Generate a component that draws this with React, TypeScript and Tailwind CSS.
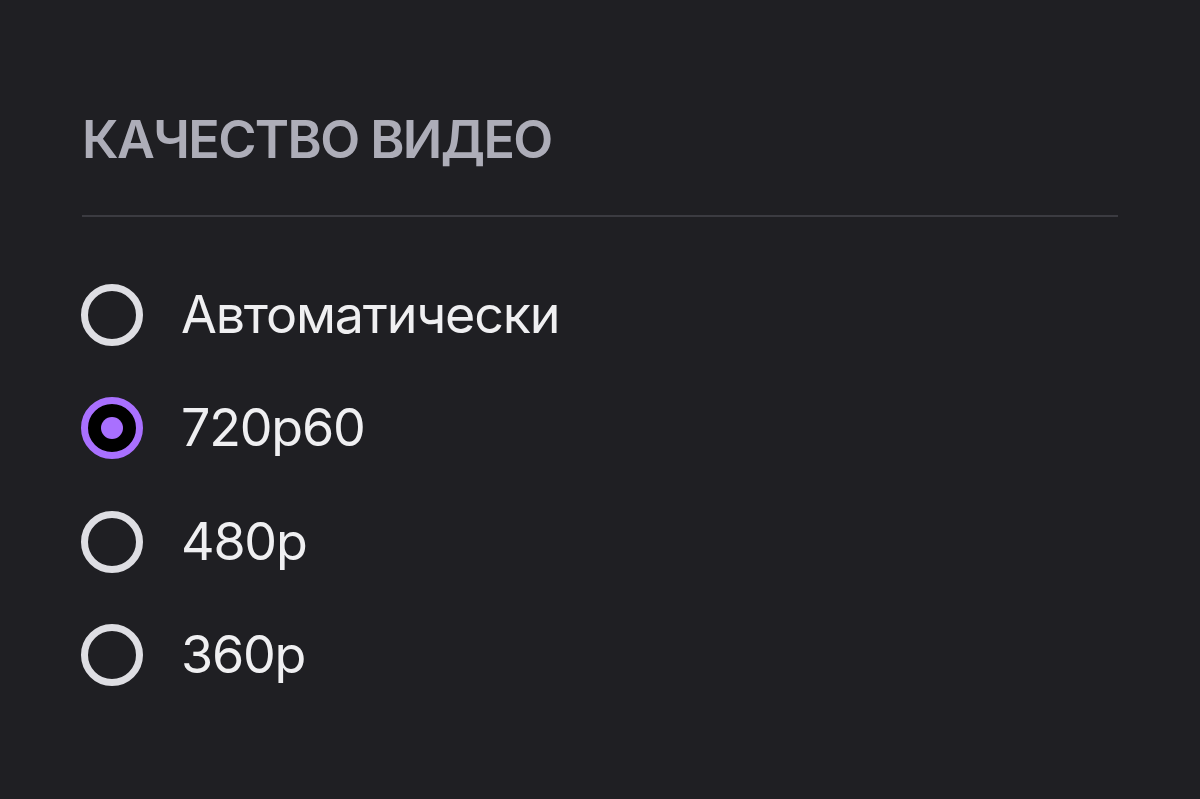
const options = ['Автоматически', '720p60', '480p', '360p']

function Radio({ checked }: { checked: boolean }) {
  if (checked) {
    return (
      <span className="flex h-[62px] w-[62px] shrink-0 items-center justify-center rounded-full border-[7px] border-[#a970ff] bg-black">
        <span className="h-[22px] w-[22px] rounded-full bg-[#a970ff]" />
      </span>
    )
  }
  return <span className="h-[62px] w-[62px] shrink-0 rounded-full border-[7px] border-[#dedee3]" />
}

export default function App() {
  const selected = '720p60'
  return (
    <div
      className="h-[799px] w-[1200px] overflow-hidden bg-[#1f1f23] pl-[81px] pr-[82px] pt-[114px]"
      style={{ fontFamily: 'Inter, "Noto Sans", sans-serif' }}
    >
      <h2 className="text-[52px] leading-[52px] font-semibold tracking-[-1.6px] text-[#adadb8] pl-px">КАЧЕСТВО ВИДЕО</h2>
      <div className="mt-[49px] ml-px h-[2px] bg-[#3b3b41]" />
      <ul className="mt-[41px] flex flex-col">
        {options.map(o => (
          <li key={o} className="flex h-[113.5px] items-center gap-[38px]">
            <Radio checked={o === selected} />
            <span className="text-[52px] leading-[52px] tracking-[-1.2px] text-[#efeff1]">{o}</span>
          </li>
        ))}
      </ul>
    </div>
  )
}
